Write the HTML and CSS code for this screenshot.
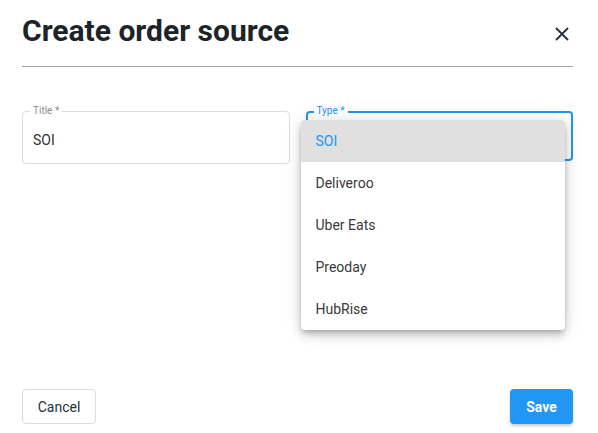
FILE: index.html
```html
<!DOCTYPE html>
<html>
<head>
<meta charset="utf-8">
<link rel="stylesheet" href="styles.css">
</head>
<body>
<div class="dialog">
  <div class="header">
    <h1 class="title">Create order source</h1>
    <button class="close" aria-label="Close">
      <svg width="14" height="14" viewBox="0 0 14 14"><path d="M1 1L13 13M13 1L1 13" stroke="#263238" stroke-width="1.8" fill="none"/></svg>
    </button>
  </div>
  <div class="divider"></div>
  <div class="fields">
    <div class="field">
      <span class="label">Title *</span>
      <div class="value">SOI</div>
    </div>
    <div class="field focused">
      <span class="label">Type *</span>
      <ul class="menu">
        <li class="item selected">SOI</li>
        <li class="item">Deliveroo</li>
        <li class="item">Uber Eats</li>
        <li class="item">Preoday</li>
        <li class="item">HubRise</li>
      </ul>
    </div>
  </div>
  <div class="footer">
    <button class="btn cancel">Cancel</button>
    <button class="btn save">Save</button>
  </div>
</div>
</body>
</html>
```
FILE: styles.css
```css
* { box-sizing: border-box; }
html, body { margin: 0; padding: 0; background: #fff; }
body { font-family: Roboto, "Liberation Sans", sans-serif; color: #333; }
.dialog {
  height: 433px;
  padding: 11px 25px 9px 22px;
  display: flex;
  flex-direction: column;
}
.header {
  display: flex;
  align-items: center;
  justify-content: space-between;
  height: 40px;
}
.title {
  margin: 0;
  font-size: 30px;
  line-height: 40px;
  font-weight: 700;
  color: #1c2429;
}
.close {
  border: 0;
  background: none;
  padding: 0;
  width: 14px;
  height: 14px;
  margin: 6px 4px 0 0;
  display: flex;
}
.divider {
  height: 1px;
  background: #a3a3a3;
  margin-top: 15px;
}
.fields {
  display: grid;
  grid-template-columns: 1fr 1fr;
  gap: 16px;
  margin-top: 44px;
}
.field {
  position: relative;
  height: 53px;
  border: 1px solid #dcdcdc;
  border-radius: 4px;
  padding: 0 10px;
  display: flex;
  align-items: center;
}
.field.focused {
  border: 2px solid #2196f3;
  height: 50px;
  padding: 0 9px;
}
.label {
  position: absolute;
  top: -7px;
  left: 7px;
  padding: 0 3px;
  background: #fff;
  font-size: 10px;
  line-height: 12px;
  color: #8a8a8a;
}
.focused .label { color: #2196f3; left: 6px; top: -8px; }
.value {
  font-size: 14px;
  color: #333;
  padding-top: 5px;
}
.menu {
  position: absolute;
  top: 7px;
  left: -7px;
  width: 264px;
  margin: 0;
  padding: 0;
  list-style: none;
  background: #fff;
  border-radius: 4px;
  overflow: hidden;
  box-shadow: 0 3px 5px -1px rgba(0,0,0,0.2), 0 6px 10px 0 rgba(0,0,0,0.14), 0 1px 18px 0 rgba(0,0,0,0.12);
  z-index: 2;
}
.item {
  height: 42px;
  line-height: 42px;
  padding-left: 15px;
  font-size: 14px;
  color: #3a3a3a;
}
.item.selected {
  background: #e0e0e0;
  color: #2196f3;
}
.footer {
  margin-top: auto;
  display: flex;
  justify-content: space-between;
}
.btn {
  height: 35px;
  border-radius: 4px;
  font-family: Roboto, "Liberation Sans", sans-serif;
  font-size: 14px;
}
.cancel {
  width: 74px;
  background: #fff;
  border: 1px solid #dcdcdc;
  color: #263238;
  font-weight: 400;
}
.save {
  width: 63px;
  background: #2196f3;
  border: 0;
  color: #fff;
  font-weight: 700;
  box-shadow: 0 2px 3px rgba(0,0,0,0.2);
}
```
